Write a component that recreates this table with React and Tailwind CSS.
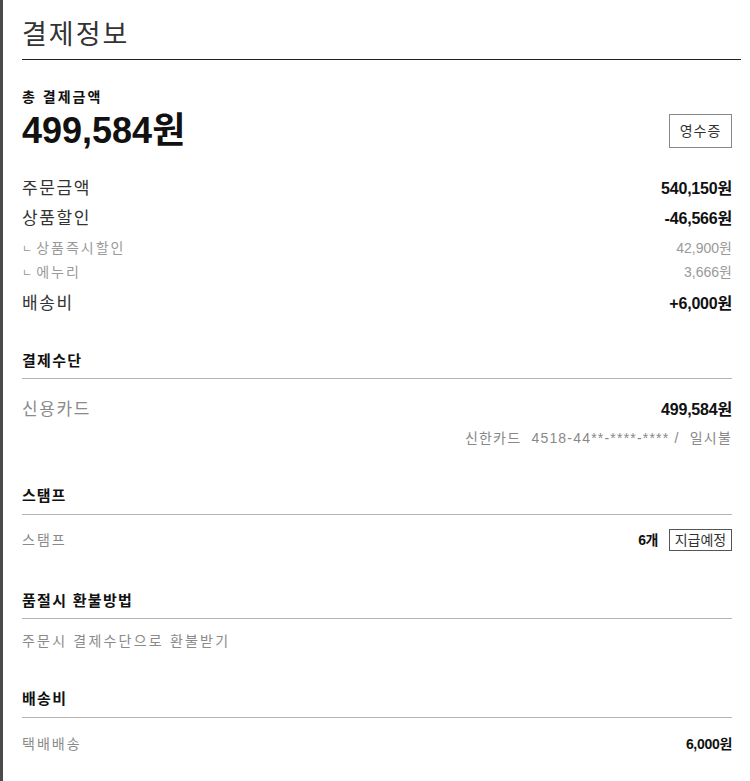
const FONT = "font-['Liberation_Sans','Noto_Sans_CJK_KR',sans-serif]";

function Row({ label, value, sub, className = '' }) {
  return (
    <div className={`flex items-center justify-between ${className}`}>
      <span
        className={
          sub
            ? 'text-[14px] text-[#9a9a9a] tracking-[2px]'
            : 'text-[17px] text-[#333] tracking-[1.6px]'
        }
      >
        {sub && <span className="text-[11px] mr-[4px] text-[#999] tracking-normal">ㄴ</span>}
        {label}
      </span>
      <span
        className={
          sub
            ? 'text-[14px] text-[#999]'
            : 'text-[16px] font-bold text-[#111] tracking-[-0.2px]'
        }
      >
        {value}
      </span>
    </div>
  );
}

export default function App() {
  return (
    <div className={`w-[750px] h-[781px] flex bg-white overflow-hidden ${FONT}`}>
      <div className="w-[3px] shrink-0 bg-[#4b4b4b]" />
      <div className="flex-1 pl-[19px] pr-[9px]">
        <header className="pt-[19px] pb-[8px] border-b border-[#222]">
          <h1 className="h-[32px] leading-[32px] text-[27px] text-[#333] tracking-[2px]">결제정보</h1>
        </header>

        <div className="mr-[9px]">
          <div className="mt-[28px] h-[18px] leading-[18px] text-[14px] font-bold text-[#111] tracking-[2px]">
            총 결제금액
          </div>
          <div className="mt-[5px] h-[40px] flex items-center justify-between">
            <span className="text-[36px] font-bold text-[#111]">499,584원</span>
            <button className="w-[63px] h-[34px] border border-[#888] text-[14px] text-[#333] bg-white tracking-[1px]">
              영수증
            </button>
          </div>

          <div className="mt-[23px]">
            <Row className="h-[30px]" label="주문금액" value="540,150원" />
            <Row className="h-[29px]" label="상품할인" value="-46,566원" />
            <Row className="h-[24px] mt-[3px]" sub label="상품즉시할인" value="42,900원" />
            <Row className="h-[24px]" sub label="에누리" value="3,666원" />
            <Row className="h-[30px] mt-[5px]" label="배송비" value="+6,000원" />
          </div>
        </div>

        <section className="mr-[9px] mt-[32px]">
          <h3 className="h-[20px] leading-[20px] text-[15px] font-bold text-[#111] tracking-[1.3px] pb-[7px] box-content border-b border-[#b5b5b5]">
            결제수단
          </h3>
          <div className="mt-[18px] h-[26px] flex items-center justify-between">
            <span className="text-[17px] text-[#8a8a8a] tracking-[1.6px]">신용카드</span>
            <span className="text-[16px] font-bold text-[#111] tracking-[-0.2px]">499,584원</span>
          </div>
          <div className="mt-[5px] h-[20px] flex items-center justify-end text-[14px] text-[#888] tracking-[1.2px]">
            신한카드&nbsp; 4518-44**-****-**** /&nbsp; 일시불
          </div>
        </section>

        <section className="mr-[9px] mt-[38px]">
          <h3 className="h-[20px] leading-[20px] text-[15px] font-bold text-[#111] tracking-[1px] pb-[8px] box-content border-b border-[#b5b5b5]">
            스탬프
          </h3>
          <div className="mt-[13px] h-[24px] flex items-center justify-between">
            <span className="text-[14px] text-[#8a8a8a] tracking-[2px]">스탬프</span>
            <div className="flex items-center gap-[11px]">
              <span className="text-[14px] font-bold text-[#111] tracking-[-0.5px]">6개</span>
              <span className="w-[63px] h-[22px] border border-[#555] text-[14px] text-[#333] leading-[20px] text-center">
                지급예정
              </span>
            </div>
          </div>
        </section>

        <section className="mr-[9px] mt-[39px]">
          <h3 className="h-[20px] leading-[20px] text-[15px] font-bold text-[#111] tracking-[1.3px] pb-[7px] box-content border-b border-[#b5b5b5]">
            품절시 환불방법
          </h3>
          <div className="mt-[12px] h-[20px] flex items-center text-[14px] text-[#8a8a8a] tracking-[2.2px]">
            주문시 결제수단으로 환불받기
          </div>
        </section>

        <section className="mr-[9px] mt-[38px]">
          <h3 className="h-[20px] leading-[20px] text-[15px] font-bold text-[#111] tracking-[1.3px] pb-[8px] box-content border-b border-[#b5b5b5]">
            배송비
          </h3>
          <div className="mt-[16px] h-[20px] flex items-center justify-between">
            <span className="text-[14px] text-[#8a8a8a] tracking-[2px]">택배배송</span>
            <span className="text-[14px] font-bold text-[#111] tracking-[-0.3px]">6,000원</span>
          </div>
        </section>
      </div>
    </div>
  );
}
